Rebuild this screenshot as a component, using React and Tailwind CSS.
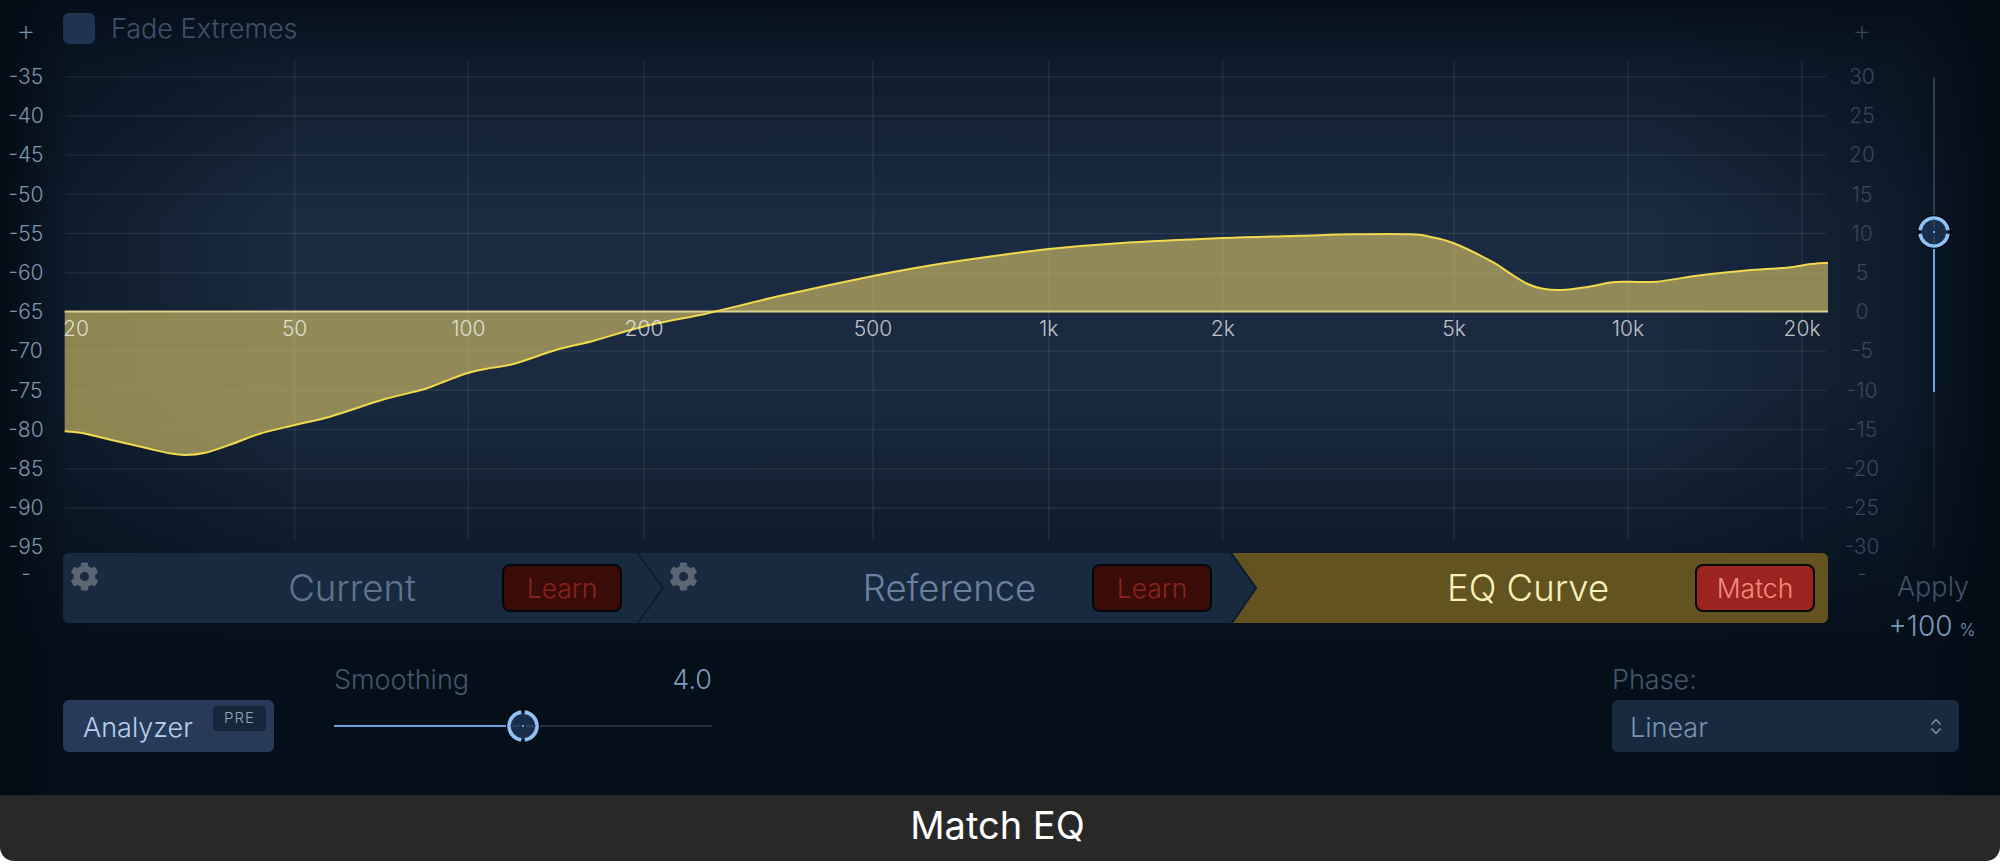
import React from 'react';
import { FaCog } from 'react-icons/fa';

const leftScale = ['-35', '-40', '-45', '-50', '-55', '-60', '-65', '-70', '-75', '-80', '-85', '-90', '-95'];
const rightScale = ['30', '25', '20', '15', '10', '5', '0', '-5', '-10', '-15', '-20', '-25', '-30'];
const freqs = [
  { x: 294.6, label: '50' },
  { x: 468.4, label: '100' },
  { x: 644, label: '200' },
  { x: 873, label: '500' },
  { x: 1048.7, label: '1k' },
  { x: 1222.8, label: '2k' },
  { x: 1454, label: '5k' },
  { x: 1628, label: '10k' },
  { x: 1802, label: '20k' },
];

// traced from the picture, page coordinates
const curve = [
  [64.7, 431.3], [80.4, 432.7], [111.6, 440], [147.3, 448.3], [169.6, 453.3], [185.3, 455], [205.4, 452.7],
  [232, 444], [259, 434], [294.6, 425], [330, 416.7], [384, 399.3], [424, 389.3], [446.4, 380.7], [468.7, 372.7],
  [486.6, 368.7], [513.4, 364], [558, 349.3], [593.8, 340.7], [642.9, 326.7], [700, 315], [716, 311.3], [784, 295],
  [873, 276], [927, 266], [985, 257.3], [1048.7, 249], [1118.7, 243.2], [1222.8, 238], [1300, 235.7], [1353.6, 234.3],
  [1411.6, 234.3], [1429.5, 236.7], [1454, 243.3], [1492, 261.7], [1510, 273.3], [1527.7, 284], [1543, 288.7],
  [1561, 290], [1585.7, 287.3], [1612.5, 282.3], [1628, 281.7], [1657, 281.7], [1697, 275.7], [1751, 270],
  [1786.6, 267.7], [1809, 264.3], [1828, 262.7],
];

const smoothPath = (pts) => {
  let d = `M${pts[0][0]} ${pts[0][1]}`;
  for (let i = 0; i < pts.length - 1; i++) {
    const p0 = pts[i - 1] || pts[i];
    const p1 = pts[i];
    const p2 = pts[i + 1];
    const p3 = pts[i + 2] || p2;
    const c1x = p1[0] + (p2[0] - p0[0]) / 6;
    const c1y = p1[1] + (p2[1] - p0[1]) / 6;
    const c2x = p2[0] - (p3[0] - p1[0]) / 6;
    const c2y = p2[1] - (p3[1] - p1[1]) / 6;
    d += ` C${c1x.toFixed(1)} ${c1y.toFixed(1)} ${c2x.toFixed(1)} ${c2y.toFixed(1)} ${p2[0]} ${p2[1]}`;
  }
  return d;
};

const Knob = ({ rotate = 0 }) => (
  <svg width="34" height="34" viewBox="0 0 34 34" className="block">
    <circle cx="17" cy="17" r="17" fill="#03080f" />
    <circle cx="17" cy="17" r="13" fill="#1a2d4a" />
    <g transform={`rotate(${rotate} 17 17)`} fill="none" stroke="#8fc1f5" strokeWidth="3.6">
      <path d="M3.1 15.3 A14 14 0 0 1 30.9 15.3" />
      <path d="M3.1 18.7 A14 14 0 0 0 30.9 18.7" />
      <path d="M17 4 V14" stroke="#3c5474" strokeWidth="1" />
      <path d="M17 20 V30" stroke="#3c5474" strokeWidth="1" />
    </g>
    <circle cx="17" cy="17" r="1" fill="#9cc6f2" />
  </svg>
);

const ScaleColumn = ({ values, className }) => (
  <div className={`flex flex-col items-center text-[21px] font-light ${className}`}>
    <div className="flex h-[57px] items-start justify-center pt-[13px] text-[30px] leading-[34px] font-extralight">+</div>
    {values.map((v) => (
      <div key={v} className="flex h-[39.2px] items-center leading-none">{v}</div>
    ))}
    <div className="flex h-[15px] items-center leading-none">-</div>
  </div>
);

const StripButton = ({ children, active }) => (
  <div
    className={`flex h-[48px] w-[120px] shrink-0 items-center justify-center rounded-[8px] border-2 border-[#05070a] pt-[2px] text-[26.5px] font-light ${
      active ? 'bg-[#9c231f] text-[#f28d84]' : 'bg-[#3a0c08] text-[#8c221b]'
    }`}
  >
    {children}
  </div>
);

const Chart = () => {
  const line = smoothPath(curve);
  return (
    <svg width="1765" height="553" viewBox="63 0 1765 553" className="block">
      {leftScale.slice(0, 12).map((v, i) => (
        <line key={v} x1="65" x2="1826" y1={76.7 + i * 39.2} y2={76.7 + i * 39.2} stroke="#ffffff" strokeOpacity="0.07" strokeWidth="1.5" />
      ))}
      {freqs.map((f) => (
        <line key={f.label} x1={f.x} x2={f.x} y1="60" y2="541" stroke="#ffffff" strokeOpacity="0.07" strokeWidth="1.5" />
      ))}
      <path d={`${line} L1828 311.5 L64.7 311.5 Z`} fill="#c5b462" fillOpacity="0.7" />
      <line x1="64.7" x2="1828" y1="311.5" y2="311.5" stroke="#d9d08c" strokeWidth="2" />
      <path d={line} fill="none" stroke="#f2d94e" strokeWidth="2" />
      <g fontFamily="Inter, sans-serif" fontSize="21" fontWeight="300" fill="#ffffff" fillOpacity="0.72" textAnchor="middle">
        <text x="76" y="336">20</text>
        {freqs.map((f) => (
          <text key={f.label} x={f.x} y="336">{f.label}</text>
        ))}
      </g>
    </svg>
  );
};

export default function App() {
  return (
    <div className="h-[864px] w-full bg-white font-['Inter',sans-serif]">
      <div className="flex h-[861px] flex-col overflow-hidden rounded-b-[14px]">
        <div className="h-[795px] bg-[#1a2b41] bg-[linear-gradient(to_right,#030b14_0px,rgba(5,15,26,0.55)_70px,rgba(5,15,26,0)_300px,rgba(5,15,26,0)_1650px,rgba(5,15,26,0.55)_1900px,#030b14_2000px),linear-gradient(to_bottom,#050f1a_0px,rgba(5,15,26,0.5)_70px,rgba(5,15,26,0)_220px,rgba(5,15,26,0)_380px,rgba(5,15,26,0.5)_530px,#050f1a_650px,#050f1a_795px)]">
          <div className="flex h-[623px]">
            {/* left dB scale */}
            <ScaleColumn values={leftScale} className="w-[52px] shrink-0 text-[#7d94ad]" />
            <div className="w-[11px] shrink-0" />

            <div className="flex w-[1765px] shrink-0 flex-col">
              <div className="relative h-[553px]">
                <Chart />
                <div className="absolute left-0 top-[10px] flex items-center gap-[16px]">
                  <div className="h-[31px] w-[32px] rounded-[6px] bg-[#1f3450]" />
                  <span className="pt-[2px] text-[27px] font-light leading-[34px] text-[#3f5268]">Fade Extremes</span>
                </div>
              </div>

              <div className="relative flex h-[70px] overflow-hidden rounded-[6px] bg-[#172a40]">
                <div className="flex w-[575px] shrink-0 items-center pl-[7px]">
                  <FaCog className="mb-[24px] h-[29px] w-[29px] shrink-0 text-[#5b6672]" />
                  <div className="ml-[103px] w-[300px] text-center text-[36.5px] font-light text-[#5f758e]">Current</div>
                  <StripButton>Learn</StripButton>
                </div>
                <div className="flex w-[594px] shrink-0 items-center pl-[31px]">
                  <FaCog className="mb-[24px] h-[29px] w-[29px] shrink-0 text-[#5b6672]" />
                  <div className="ml-[109px] w-[285px] text-center text-[36.5px] font-light text-[#6a82a0]">Reference</div>
                  <StripButton>Learn</StripButton>
                </div>
                <div className="flex flex-1 items-center bg-[#625321] pl-[129px] [clip-path:polygon(0_0,100%_0,100%_100%,0_100%,25px_50%)]">
                  <div className="w-[334px] text-center text-[36.5px] font-light text-[#f6f1b9]">EQ Curve</div>
                  <StripButton active>Match</StripButton>
                </div>
                <svg width="1765" height="70" viewBox="63 553 1765 70" className="absolute left-0 top-0" fill="none" stroke="#0c1c2e" strokeWidth="2">
                  <path d="M637.5 553 L663 588 L638 623" />
                  <path d="M1231 553 L1256 588 L1232 623" />
                </svg>
              </div>
            </div>

            {/* right dB scale + Apply slider */}
            <ScaleColumn values={rightScale} className="w-[68px] shrink-0 text-[#37485c]" />
            <div className="flex w-[76px] shrink-0 flex-col items-center pt-[77px]">
              <div className="relative h-[470px] w-[2px] shrink-0 bg-[linear-gradient(to_bottom,#2e3e50_0px,#2e3e50_300px,#16222f_320px,#16222f_470px)]">
                <div className="absolute left-0 top-[155px] h-[160px] w-[2px] bg-[#6ea3dc]" />
                <div className="absolute left-[-16px] top-[138px]">
                  <Knob />
                </div>
              </div>
              <div className="mt-[25px] mr-[2px] shrink-0 text-[27px] font-light leading-[30px] text-[#3f5167]">Apply</div>
              <div className="mt-[10px] mr-[4px] flex shrink-0 items-baseline gap-[7px] leading-[28px] text-[#7b98ba]">
                <span className="text-[28px] font-light">+100</span>
                <span className="text-[17px] font-light">%</span>
              </div>
            </div>
          </div>

          {/* bottom controls */}
          <div className="flex h-[172px] items-start pl-[63px] pt-[43px]">
            <div className="mt-[34px] flex h-[52px] w-[211px] items-center justify-between rounded-[6px] bg-[#273a58] pl-[20px] pr-[8px]">
              <span className="pt-[4px] text-[27px] font-light text-[#b5d0f0]">Analyzer</span>
              <span className="mb-[16px] flex h-[25px] w-[53px] items-center justify-center rounded-[4px] bg-[#17263a] text-[15px] font-light tracking-[1px] text-[#8fa4bc]">PRE</span>
            </div>

            <div className="ml-[60px] w-[378px]">
              <div className="flex h-[28px] items-center justify-between text-[27px] font-light">
                <span className="text-[#45566b]">Smoothing</span>
                <span className="text-[#7b98ba]">4.0</span>
              </div>
              <div className="mt-[15px] flex h-[34px] items-center">
                <div className="h-[2px] w-[172px] bg-[#6ea3dc]" />
                <Knob rotate={90} />
                <div className="h-[2px] flex-1 bg-[#22303f]" />
              </div>
            </div>

            <div className="ml-[900px] w-[347px]">
              <div className="flex h-[28px] items-center text-[27px] font-light text-[#45566b]">Phase:</div>
              <div className="mt-[6px] flex h-[52px] items-center justify-between rounded-[6px] bg-[#172a40] pl-[18px] pr-[17px]">
                <span className="pt-[4px] text-[27px] font-light text-[#7b93ad]">Linear</span>
                <svg width="12" height="17" viewBox="0 0 12 17" fill="none" stroke="#7b93ad" strokeWidth="1.5">
                  <path d="M1.5 6.5 6 1.5 10.5 6.5" />
                  <path d="M1.5 10.5 6 15.5 10.5 10.5" />
                </svg>
              </div>
            </div>
          </div>
        </div>

        <div className="flex h-[66px] items-center justify-center bg-[#282828] pb-[5px] pr-[5px] text-[38px] text-white">Match EQ</div>
      </div>
    </div>
  );
}
